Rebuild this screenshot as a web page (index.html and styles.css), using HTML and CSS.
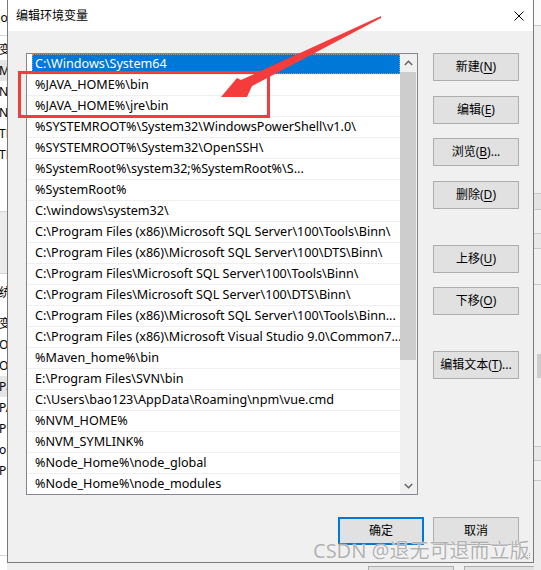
FILE: index.html
```html
<!DOCTYPE html>
<html lang="zh-CN">
<head>
<meta charset="utf-8">
<title>编辑环境变量</title>
<link rel="stylesheet" href="styles.css">
</head>
<body>
<div class="screen">
  <div class="bg-left">
    <div class="bl-top">no</div>
    <div class="bl-gap3"></div>
    <div class="bl-row">变量</div>
    <div class="bl-row sel">MAVEN_HOME</div>
    <div class="bl-row">NVM_HOME</div>
    <div class="bl-row">NVM_SYMLINK</div>
    <div class="bl-row">TEMP</div>
    <div class="bl-row">TMP</div>
    <div class="bl-blank"></div>
    <div class="bl-band"></div>
    <div class="bl-gap8"></div>
    <div class="bl-row">统变量</div>
    <div class="bl-gap10"></div>
    <div class="bl-row">变量</div>
    <div class="bl-row">OneDrive</div>
    <div class="bl-row">OS</div>
    <div class="bl-row sel">Path</div>
    <div class="bl-row">PATHEXT</div>
    <div class="bl-row">PHP</div>
    <div class="bl-row">ol</div>
    <div class="bl-row">PROCESSOR</div>
    <div class="bl-blank2"></div>
  </div>

  <div class="middle">
    <div class="dialog">
      <div class="titlebar">
        <div class="title">编辑环境变量</div>
        <div class="close">
          <svg width="10" height="10" viewBox="0 0 10 10"><path d="M0.5 0.5 L9.5 9.5 M9.5 0.5 L0.5 9.5" stroke="#000" stroke-width="1" fill="none"/></svg>
        </div>
      </div>
      <div class="content">
        <div class="main">
          <div class="listbox">
            <div class="rows">
              <div class="row sel"><span>C:\Windows\System64</span></div>
              <div class="row"><span>%JAVA_HOME%\bin</span></div>
              <div class="row"><span>%JAVA_HOME%\jre\bin</span></div>
              <div class="row"><span>%SYSTEMROOT%\System32\WindowsPowerShell\v1.0\</span></div>
              <div class="row"><span>%SYSTEMROOT%\System32\OpenSSH\</span></div>
              <div class="row"><span>%SystemRoot%\system32;%SystemRoot%\S...</span></div>
              <div class="row"><span>%SystemRoot%</span></div>
              <div class="row"><span>C:\windows\system32\</span></div>
              <div class="row"><span>C:\Program Files (x86)\Microsoft SQL Server\100\Tools\Binn\</span></div>
              <div class="row"><span>C:\Program Files (x86)\Microsoft SQL Server\100\DTS\Binn\</span></div>
              <div class="row"><span>C:\Program Files\Microsoft SQL Server\100\Tools\Binn\</span></div>
              <div class="row"><span>C:\Program Files\Microsoft SQL Server\100\DTS\Binn\</span></div>
              <div class="row"><span>C:\Program Files (x86)\Microsoft SQL Server\100\Tools\Binn...</span></div>
              <div class="row"><span>C:\Program Files (x86)\Microsoft Visual Studio 9.0\Common7...</span></div>
              <div class="row"><span>%Maven_home%\bin</span></div>
              <div class="row"><span>E:\Program Files\SVN\bin</span></div>
              <div class="row"><span>C:\Users\bao123\AppData\Roaming\npm\vue.cmd</span></div>
              <div class="row"><span>%NVM_HOME%</span></div>
              <div class="row"><span>%NVM_SYMLINK%</span></div>
              <div class="row"><span>%Node_Home%\node_global</span></div>
              <div class="row"><span>%Node_Home%\node_modules</span></div>
            </div>
            <div class="scrollbar">
              <div class="sb-btn">
                <svg width="9" height="6" viewBox="0 0 9 6"><polyline points="0.8,5 4.5,1.3 8.2,5" stroke="#606060" stroke-width="1.4" fill="none"/></svg>
              </div>
              <div class="sb-track"><div class="sb-thumb"></div></div>
              <div class="sb-btn">
                <svg width="9" height="6" viewBox="0 0 9 6"><polyline points="0.8,1 4.5,4.7 8.2,1" stroke="#606060" stroke-width="1.4" fill="none"/></svg>
              </div>
            </div>
          </div>
          <div class="btns">
            <div class="btn">新建(<u>N</u>)</div>
            <div class="btn">编辑(<u>E</u>)</div>
            <div class="btn near">浏览(<u>B</u>)...</div>
            <div class="btn">删除(<u>D</u>)</div>
            <div class="btn far">上移(<u>U</u>)</div>
            <div class="btn near">下移(<u>O</u>)</div>
            <div class="btn far">编辑文本(<u>T</u>)...</div>
          </div>
        </div>
        <div class="footer">
          <div class="btn default">确定</div>
          <div class="btn">取消</div>
        </div>
      </div>
      <svg class="grip" width="6" height="6" viewBox="0 0 6 6">
        <rect x="4" y="0" width="1" height="1" fill="#a0a0a0"/>
        <rect x="2" y="2" width="1" height="1" fill="#a0a0a0"/>
        <rect x="4" y="2" width="1" height="1" fill="#a0a0a0"/>
        <rect x="0" y="4" width="1" height="1" fill="#a0a0a0"/>
        <rect x="2" y="4" width="1" height="1" fill="#a0a0a0"/>
        <rect x="4" y="4" width="1" height="1" fill="#a0a0a0"/>
      </svg>
    </div>
    <div class="under">
      <div class="ghost-btn"></div>
      <div class="ghost-btn wide"></div>
    </div>
  </div>

  <div class="bg-right">
    <div class="br-a"></div>
    <div class="br-b"></div>
    <div class="br-c"></div>
    <div class="br-d"></div>
    <div class="br-e"></div>
    <div class="br-f"></div>
    <div class="br-g"><div class="br-thumb"></div></div>
    <div class="br-h"></div>
    <div class="br-i"></div>
    <div class="br-j"></div>
  </div>
</div>

<svg class="annot" width="541" height="570" viewBox="0 0 541 570">
  <rect x="19.5" y="72.5" width="249" height="44" fill="none" stroke="#f43c3c" stroke-width="3"/>
  <polygon points="221,97 237,78 241,80 381,16 381,18 252,86 247,97" fill="#f43c3c"/>
</svg>

<div class="watermark">CSDN @退无可退而立版</div>
</body>
</html>
```

FILE: styles.css
```css
* {
  box-sizing: border-box;
}

html, body {
  margin: 0;
  padding: 0;
}

body {
  width: 541px;
  height: 570px;
  overflow: hidden;
  position: relative;
  font-family: "Noto Sans", "Noto Sans CJK SC", sans-serif;
  font-size: 12px;
  color: #000;
  background: #f0f0f0;
}

.screen {
  display: flex;
  height: 570px;
}

/* ---------- background window, left sliver ---------- */
.bg-left {
  width: 7px;
  flex: none;
  overflow: hidden;
  background: #fff;
  display: flex;
  flex-direction: column;
}

.bl-top {
  height: 36px;
  line-height: 35px;
  border-bottom: 1px solid #d5d5d5;
  white-space: nowrap;
  text-indent: -7px;
}

.bl-gap3 { height: 3px; flex: none; }
.bl-gap8 { height: 8px; flex: none; }
.bl-gap10 { height: 10px; flex: none; }

.bl-row {
  height: 21px;
  flex: none;
  line-height: 21px;
  white-space: nowrap;
  text-indent: -1px;
}

.bl-row.sel {
  background: #e5e5e5;
}

.bl-blank {
  height: 47px;
  flex: none;
  border-bottom: 1px solid #d5d5d5;
}

.bl-band {
  height: 62px;
  flex: none;
  background: #ececec;
  border-bottom: 1px solid #d5d5d5;
}

.bl-blank2 {
  height: 75px;
  flex: none;
  border-bottom: 1px solid #d5d5d5;
}

/* ---------- dialog ---------- */
.middle {
  width: 527px;
  flex: none;
  display: flex;
  flex-direction: column;
}

.dialog {
  height: 563px;
  flex: none;
  position: relative;
  border: 1px solid #7a7a7a;
  border-top: none;
  background: #f0f0f0;
  display: flex;
  flex-direction: column;
}

.titlebar {
  height: 31px;
  flex: none;
  background: #fff;
  display: flex;
  align-items: center;
  padding-left: 8px;
}

.title {
  flex: 1;
  font-size: 12px;
  line-height: 16px;
}

.close {
  width: 28px;
  height: 31px;
  display: flex;
  align-items: center;
  justify-content: center;
}

.close svg {
  display: block;
}

.content {
  flex: 1;
  display: flex;
  flex-direction: column;
  padding: 21px 14px 0 18px;
}

.main {
  display: flex;
  align-items: flex-start;
  gap: 15px;
}

.listbox {
  width: 392px;
  height: 442px;
  flex: none;
  margin-top: 1px;
  border: 1px solid #828790;
  background: #fff;
  display: flex;
}

.rows {
  flex: 1;
  overflow: hidden;
}

.row {
  height: 21px;
  border-bottom: 1px solid #f0f0f0;
  padding-left: 5px;
  display: flex;
}

.row span {
  flex: 1;
  padding-left: 3px;
  font-size: 12.6px;
  line-height: 20px;
  white-space: nowrap;
  overflow: hidden;
}

.row.sel span {
  background: #0078d7;
  color: #fff;
  outline: 1px dotted #ff8728;
  outline-offset: -1px;
}

.scrollbar {
  width: 17px;
  flex: none;
  background: #f0f0f0;
  display: flex;
  flex-direction: column;
}

.sb-btn {
  height: 17px;
  flex: none;
  display: flex;
  align-items: center;
  justify-content: center;
}

.sb-btn svg {
  display: block;
}

.sb-track {
  flex: 1;
  padding: 1px 1px 0 0;
}

.sb-thumb {
  height: 288px;
  background: #cdcdcd;
}

.btns {
  width: 86px;
  flex: none;
  display: flex;
  flex-direction: column;
  padding-top: 1px;
}

.btn {
  width: 86px;
  height: 28px;
  flex: none;
  border: 1px solid #adadad;
  background: #e1e1e1;
  display: flex;
  align-items: center;
  justify-content: center;
  font-size: 12px;
  line-height: 16px;
  white-space: nowrap;
}

.btns .btn + .btn {
  margin-top: 15px;
}

.btns .btn.near {
  margin-top: 14px;
}

.btns .btn.far {
  margin-top: 36px;
}

.btn u {
  text-decoration: underline;
  text-underline-offset: 2px;
}

.footer {
  display: flex;
  justify-content: flex-end;
  gap: 9px;
  margin-top: 22px;
}

.btn.default {
  border: 2px solid #0078d7;
}

.grip {
  position: absolute;
  right: 2px;
  bottom: 3px;
}

.under {
  height: 7px;
  flex: none;
  display: flex;
  gap: 10px;
  padding: 3px 0 0 361px;
  overflow: hidden;
}

.ghost-btn {
  width: 86px;
  height: 20px;
  flex: none;
  border: 1px solid #adadad;
  background: #e1e1e1;
}

.ghost-btn.wide {
  width: 90px;
}

/* ---------- background window, right sliver ---------- */
.bg-right {
  flex: 1;
  overflow: hidden;
  display: flex;
  flex-direction: column;
  background: #f0f0f0;
}

.br-a {
  height: 26px;
  flex: none;
  background: #fbfbfb;
  border-bottom: 1px solid #c8c8c8;
}

.br-b {
  height: 168px;
  flex: none;
  border-bottom: 1px solid #c8c8c8;
}

.br-c {
  height: 16px;
  flex: none;
  background: #e3e3e3;
  border-bottom: 1px solid #c8c8c8;
}

.br-d {
  height: 24px;
  flex: none;
  border-bottom: 1px solid #c8c8c8;
}

.br-e {
  height: 15px;
  flex: none;
  background: #e8e8e8;
  border-bottom: 1px solid #c8c8c8;
}

.br-f {
  height: 36px;
  flex: none;
  border-bottom: 1px solid #c8c8c8;
}

.br-g {
  height: 162px;
  flex: none;
  border-bottom: 1px solid #c8c8c8;
  padding: 69px 0 0 3px;
}

.br-thumb {
  width: 4px;
  height: 24px;
  background: #cdcdcd;
}

.br-h {
  height: 14px;
  flex: none;
  background: #e8e8e8;
  border-bottom: 1px solid #c8c8c8;
}

.br-i {
  height: 20px;
  flex: none;
  border-bottom: 1px solid #c8c8c8;
}

.br-j {
  flex: 1;
  background: #ececec;
}

/* ---------- annotations ---------- */
.annot {
  position: absolute;
  left: 0;
  top: 0;
  pointer-events: none;
}

.watermark {
  position: absolute;
  left: 313px;
  top: 539px;
  font-family: "Noto Sans", "Noto Sans CJK SC", sans-serif;
  font-size: 20px;
  line-height: 24px;
  color: rgba(150, 150, 150, 0.75);
  text-shadow: 0 0 1px #fff, 0 0 1px #fff;
  white-space: nowrap;
  pointer-events: none;
}
```
